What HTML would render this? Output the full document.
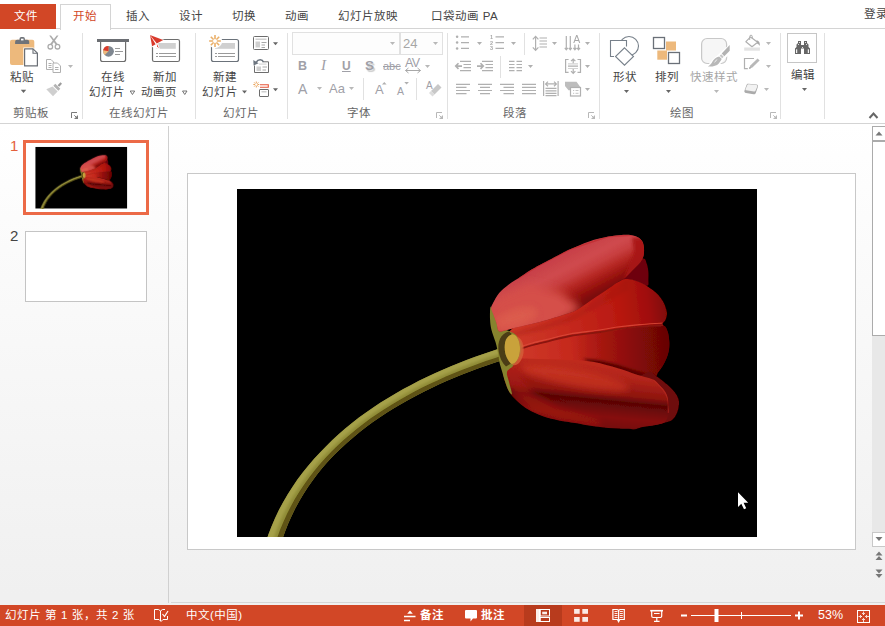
<!DOCTYPE html>
<html lang="zh-CN">
<head>
<meta charset="utf-8">
<title>PowerPoint</title>
<style>
html,body{margin:0;padding:0;}
body{width:885px;height:626px;overflow:hidden;background:#fff;position:relative;
  font-family:"Liberation Sans","Noto Sans CJK SC",sans-serif;font-size:12px;color:#444;}
.a{position:absolute;}
.t{position:absolute;white-space:nowrap;line-height:16px;height:16px;font-size:11.5px;letter-spacing:0.5px;color:#444;}
.g{color:#666;}
.d{color:#a6a6a6;}
.w{color:#fff;}
.fb{color:#a0a0a7;letter-spacing:0;}
.c{text-align:center;}
#tabline{left:0;top:28px;width:885px;height:1px;background:#d4d4d4;}
#file{left:0;top:4px;width:56px;height:25px;background:#d24726;}
#tabsel{left:60px;top:4px;width:49px;height:25px;background:#fff;border:1px solid #d4d4d4;border-bottom:none;}
#ribline{left:0;top:123px;width:885px;height:1px;background:#d4d4d4;}
.sep{position:absolute;width:1px;background:#e1e1e1;top:33px;height:86px;}
#work{left:0;top:124px;width:885px;height:481px;background:linear-gradient(#ffffff 0px,#f0f0f0 470px);}
#pdiv{left:168px;top:126px;width:1px;height:477px;background:#d0d0d0;}
#botline{left:171px;top:602px;width:714px;height:1px;background:#d6d6d6;}
#th1{left:23px;top:140px;width:126px;height:75px;background:#fff;box-sizing:border-box;border:3px solid #ec6a47;}
#th2{left:25px;top:231px;width:120px;height:69px;border:1px solid #c4c4c4;background:#fff;}
#slide{left:187px;top:173px;width:667px;height:375px;border:1px solid #c8c8c8;background:#fff;}
#status{left:0;top:605px;width:885px;height:21px;background:#d24726;}
#vsel{left:524px;top:605px;width:38px;height:21px;background:#b83b1d;}
#sbtrack{left:872px;top:126px;width:13px;height:420px;background:#e8e8e8;}
#sbup{left:872px;top:126px;width:13px;height:15px;background:#fff;border:1px solid #ababab;border-right:none;box-sizing:border-box;}
#sbthumb{left:872px;top:141px;width:14px;height:195px;background:#fff;border:1px solid #ababab;box-sizing:border-box;}
#sbdown{left:872px;top:532px;width:14px;height:15px;background:#fff;border:1px solid #c8c8c8;box-sizing:border-box;}
.box{position:absolute;box-sizing:border-box;border:1px solid #e1e1e1;background:#fdfdfd;}
svg{position:absolute;left:0;top:0;overflow:visible;}
</style>
</head>
<body>
<!-- tab row -->
<div class="a" id="tabline"></div>
<div class="a" id="file"></div>
<div class="a" id="tabsel"></div>
<div class="t w" style="left:14px;top:8px;">文件</div>
<div class="t" style="left:73px;top:8px;color:#d24726;">开始</div>
<div class="t" style="left:126px;top:8px;">插入</div>
<div class="t" style="left:179px;top:8px;">设计</div>
<div class="t" style="left:232px;top:8px;">切换</div>
<div class="t" style="left:285px;top:8px;">动画</div>
<div class="t" style="left:338px;top:8px;">幻灯片放映</div>
<div class="t" style="left:431px;top:8px;">口袋动画 PA</div>
<div class="t" style="left:864px;top:6px;">登录</div>

<!-- ribbon -->
<div class="a" id="ribline"></div>
<div class="sep" style="left:82px;"></div>
<div class="sep" style="left:195px;"></div>
<div class="sep" style="left:287px;"></div>
<div class="sep" style="left:447px;"></div>
<div class="sep" style="left:599px;"></div>
<div class="sep" style="left:780px;"></div>
<div class="sep" style="left:824px;"></div>
<div class="sep" style="left:363px;top:78px;height:22px;"></div>
<div class="sep" style="left:416px;top:78px;height:22px;"></div>
<div class="sep" style="left:500px;top:56px;height:22px;"></div>
<div class="sep" style="left:524px;top:33px;height:22px;"></div>

<div class="t" style="left:10px;top:69px;">粘贴</div>
<div class="t g" style="left:13px;top:105px;">剪贴板</div>

<div class="t" style="left:101px;top:69px;">在线</div>
<div class="t" style="left:89px;top:84px;">幻灯片</div>
<div class="t" style="left:153px;top:69px;">新加</div>
<div class="t" style="left:141px;top:84px;">动画页</div>
<div class="t g" style="left:109px;top:105px;">在线幻灯片</div>

<div class="t" style="left:213px;top:69px;">新建</div>
<div class="t" style="left:202px;top:84px;">幻灯片</div>
<div class="t g" style="left:223px;top:105px;">幻灯片</div>

<div class="box" style="left:292px;top:32px;width:108px;height:23px;"></div>
<div class="box" style="left:400px;top:32px;width:43px;height:23px;"></div>
<div class="t" style="left:403px;top:36px;font-size:13px;color:#a6a6a6;letter-spacing:0;">24</div>
<div class="t fb" style="left:298px;top:58px;font-weight:bold;font-size:12.5px;">B</div>
<div class="t fb" style="left:321px;top:57px;font-family:'Liberation Serif',serif;font-style:italic;font-size:15px;">I</div>
<div class="t fb" style="left:342px;top:58px;font-weight:bold;font-size:12px;text-decoration:underline;">U</div>
<div class="t fb" style="left:365px;top:58px;font-weight:bold;font-size:13.5px;text-shadow:1.5px 1.5px 1px #ccc;">S</div>
<div class="t fb" style="left:383px;top:58px;font-size:11px;text-decoration:line-through;">abc</div>
<div class="t fb" style="left:405px;top:55px;font-size:12.5px;letter-spacing:-0.6px;">AV</div>
<div class="t fb" style="left:298px;top:81px;font-size:14px;">A</div>
<div class="t fb" style="left:329px;top:81px;font-size:13px;">Aa</div>
<div class="t fb" style="left:375px;top:82px;font-size:13px;">A</div>
<div class="t fb" style="left:397px;top:83px;font-size:10.5px;">A</div>
<div class="t fb" style="left:426px;top:78px;font-size:10px;">A</div>
<div class="t g" style="left:347px;top:105px;">字体</div>
<div class="t g" style="left:503px;top:105px;">段落</div>

<div class="t" style="left:613px;top:69px;">形状</div>
<div class="t" style="left:655px;top:69px;">排列</div>
<div class="t d" style="left:690px;top:69px;">快速样式</div>
<div class="t g" style="left:670px;top:105px;">绘图</div>

<div class="box" style="left:787px;top:33px;width:30px;height:30px;border-color:#c6c6c6;background:#fff;"></div>
<div class="t" style="left:791px;top:67px;">编辑</div>

<!-- work area -->
<div class="a" id="work"></div>
<div class="a" id="pdiv"></div>
<div class="a" id="botline"></div>
<div class="t" style="left:10px;top:138px;font-size:15px;letter-spacing:0;color:#e4603c;">1</div>
<div class="t" style="left:10px;top:228px;font-size:15px;letter-spacing:0;color:#444;">2</div>
<div class="a" id="th1"></div>
<div class="a" id="th2"></div>
<div class="a" id="slide"></div>
<div class="a" id="sbtrack"></div>
<div class="a" id="sbup"></div>
<div class="a" id="sbthumb"></div>
<div class="a" id="sbdown"></div>

<!-- status bar -->
<div class="a" id="status"></div>
<div class="a" id="vsel"></div>
<div class="t w" style="left:5px;top:607px;letter-spacing:0.6px;">幻灯片 第 1 张，共 2 张</div>
<div class="t w" style="left:186px;top:607px;">中文(中国)</div>
<div class="t w" style="left:420px;top:607px;font-weight:bold;">备注</div>
<div class="t w" style="left:481px;top:607px;font-weight:bold;">批注</div>
<div class="t w" style="left:818px;top:607px;font-size:12.5px;letter-spacing:0;">53%</div>

<svg width="885" height="626" viewBox="0 0 885 626">
<defs>
<linearGradient id="gTop" gradientUnits="userSpaceOnUse" x1="572" y1="238" x2="602" y2="296"><stop offset="0" stop-color="#bf363e"/><stop offset="0.14" stop-color="#c73f47"/><stop offset="0.38" stop-color="#cf4a4e"/><stop offset="0.52" stop-color="#c83f40"/><stop offset="0.66" stop-color="#b62824"/><stop offset="0.8" stop-color="#9c1410"/><stop offset="0.93" stop-color="#7e0a08"/><stop offset="1" stop-color="#740807"/></linearGradient>
<linearGradient id="gMid" gradientUnits="userSpaceOnUse" x1="510" y1="345" x2="670" y2="325"><stop offset="0" stop-color="#cf3a2a"/><stop offset="0.35" stop-color="#c62a1e"/><stop offset="0.7" stop-color="#b81810"/><stop offset="0.88" stop-color="#a00e0a"/><stop offset="1" stop-color="#7c0606"/></linearGradient>
<linearGradient id="gBot" gradientUnits="userSpaceOnUse" x1="578" y1="356" x2="571" y2="428"><stop offset="0" stop-color="#c42e1f"/><stop offset="0.25" stop-color="#b0241a"/><stop offset="0.48" stop-color="#8e140e"/><stop offset="0.58" stop-color="#5a0505"/><stop offset="0.66" stop-color="#6c0808"/><stop offset="0.8" stop-color="#860e0c"/><stop offset="1" stop-color="#700a0a"/></linearGradient>
<radialGradient id="gBase" gradientUnits="userSpaceOnUse" cx="511.500" cy="350" r="15"><stop offset="0" stop-color="#d0a63a"/><stop offset="0.5" stop-color="#c49c36"/><stop offset="0.72" stop-color="#6a5a18"/><stop offset="0.86" stop-color="#4e4010"/><stop offset="1" stop-color="#7e7c2c"/></radialGradient>
<linearGradient id="gShade" gradientUnits="userSpaceOnUse" x1="572" y1="0" x2="672" y2="0"><stop offset="0" stop-color="#6e0505" stop-opacity="0"/><stop offset="0.6" stop-color="#6e0505" stop-opacity="0.6"/><stop offset="1" stop-color="#600404" stop-opacity="0.85"/></linearGradient>
<filter id="bl1" x="-5%" y="-5%" width="110%" height="110%"><feGaussianBlur stdDeviation="0.550"/></filter>
<filter id="bl2" x="-20%" y="-20%" width="140%" height="140%"><feGaussianBlur stdDeviation="1.500"/></filter>
<filter id="bl5" x="-40%" y="-40%" width="180%" height="180%"><feGaussianBlur stdDeviation="5"/></filter>
<filter id="bl3" x="-30%" y="-30%" width="160%" height="160%"><feGaussianBlur stdDeviation="3"/></filter>
<clipPath id="cpMid"><path d="M605.0,288.0C612.5,284.0 616.5,282.5 620.0,281.0C623.5,279.5 623.4,279.2 625.8,279.1C628.2,279.0 631.4,279.6 634.4,280.5C637.4,281.4 641.1,282.9 644.0,284.4C646.9,285.8 649.2,287.4 651.6,289.2C654.0,290.9 656.5,292.8 658.4,294.9C660.3,297.0 661.8,299.4 663.1,301.6C664.4,303.9 665.4,306.3 666.0,308.4C666.6,310.5 667.1,312.2 667.0,314.1C666.9,316.0 666.3,318.3 665.5,319.9C664.7,321.5 662.5,322.8 662.4,323.9C662.3,325.0 664.3,325.6 665.1,326.6C665.9,327.6 666.5,328.7 667.0,330.0C667.5,331.3 668.0,332.4 668.4,334.4C668.8,336.4 669.2,339.4 669.3,342.1C669.4,344.8 669.3,348.0 668.8,350.7C668.3,353.4 667.4,355.8 666.4,358.4C665.4,360.9 664.0,363.6 662.6,366.0C661.2,368.4 659.1,370.9 657.8,372.7C656.5,374.5 657.9,375.1 654.9,376.8C651.9,378.5 649.1,381.5 640.0,383.0C630.9,384.5 616.7,386.5 600.0,386.0C583.3,385.5 555.0,382.3 540.0,380.0C525.0,377.7 516.2,376.7 510.0,372.0C503.8,367.3 504.0,357.7 503.0,352.0C502.0,346.3 499.5,344.0 504.0,338.0C508.5,332.0 518.2,321.5 530.0,316.0C541.8,310.5 562.5,309.7 575.0,305.0C587.5,300.3 597.5,292.0 605.0,288.0Z"/></clipPath>
<clipPath id="cpBot"><path d="M501.0,358.0C498.8,358.8 501.2,360.7 501.5,363.0C501.8,365.3 502.3,368.9 502.8,371.8C503.3,374.7 503.6,376.9 504.6,380.2C505.7,383.5 507.1,388.3 509.1,391.7C511.1,395.1 513.5,397.7 516.7,400.7C519.9,403.7 523.7,407.0 528.2,409.6C532.7,412.2 538.5,414.8 543.6,416.6C548.7,418.4 553.7,419.4 558.9,420.5C564.1,421.6 570.0,422.2 575.0,423.0C580.0,423.8 583.6,424.7 589.2,425.5C594.8,426.3 601.6,427.4 608.4,427.9C615.2,428.4 624.0,428.9 630.0,428.7C636.0,428.5 639.9,427.3 644.4,426.6C648.9,425.9 653.4,425.5 656.8,424.7C660.2,423.9 663.0,423.9 665.0,422.0C667.0,420.1 668.0,415.8 668.6,413.0C669.2,410.2 668.5,407.9 668.4,405.5C668.3,403.1 668.4,401.0 667.9,398.8C667.4,396.6 666.9,394.4 665.5,392.1C664.1,389.9 661.8,387.4 659.7,385.3C657.6,383.2 656.9,381.3 653.1,379.5C649.3,377.7 643.0,376.6 637.1,374.7C631.2,372.8 625.1,370.4 617.9,368.3C610.7,366.2 602.0,363.4 594.0,362.0C586.0,360.6 579.0,360.5 570.0,360.0C561.0,359.5 549.2,359.3 540.0,359.0C530.8,358.7 521.5,358.2 515.0,358.0C508.5,357.8 503.2,357.2 501.0,358.0Z"/></clipPath>
<clipPath id="cpTop"><path d="M498.8,331.0C497.4,329.8 497.4,325.8 496.5,323.0C495.6,320.2 494.2,316.5 493.3,314.0C492.4,311.5 491.3,309.9 491.3,308.0C491.3,306.1 492.1,305.1 493.4,302.6C494.7,300.1 496.6,296.0 499.2,293.0C501.8,290.0 505.6,286.9 508.8,284.4C512.0,281.9 514.8,280.5 518.4,278.2C522.0,275.9 526.8,272.4 530.3,270.3C533.8,268.2 534.5,267.8 539.2,265.3C543.9,262.8 553.3,257.9 558.4,255.2C563.5,252.5 564.9,251.6 570.0,249.3C575.1,247.0 582.8,243.5 589.2,241.4C595.6,239.3 603.0,237.7 608.4,236.6C613.8,235.5 617.6,235.1 621.5,234.9C625.4,234.7 629.1,234.8 632.0,235.3C634.9,235.8 637.0,236.6 638.8,237.7C640.6,238.8 641.7,240.2 642.6,242.0C643.5,243.8 643.8,246.6 644.0,248.8C644.2,251.1 644.0,253.6 643.6,255.5C643.2,257.4 642.6,258.7 641.6,260.3C640.6,261.9 639.4,263.2 637.8,265.0C636.2,266.8 634.0,268.7 632.0,270.8C630.0,272.9 627.5,276.0 625.5,277.6C623.5,279.2 623.4,278.5 620.0,280.7C616.6,282.9 610.0,287.6 605.0,291.0C600.0,294.4 594.7,297.8 590.0,301.0C585.3,304.2 581.1,307.7 576.7,310.0C572.4,312.3 570.0,312.8 563.9,314.8C557.8,316.8 548.0,319.9 540.0,322.0C532.0,324.1 521.8,326.2 516.0,327.6C510.2,329.0 507.9,329.9 505.0,330.5C502.1,331.1 500.2,332.2 498.8,331.0Z"/></clipPath>
<clipPath id="cpStem"><path d="M260.2,562.5L262.5,553.3L265.1,544.2L268.1,535.3L271.4,526.7L275.0,518.3L278.9,510.1L283.1,502.2L287.6,494.4L292.4,486.9L297.4,479.6L302.7,472.6L308.2,465.7L313.9,459.1L319.8,452.7L325.9,446.4L332.1,440.2L338.6,434.3L345.2,428.6L352.0,423.0L358.9,417.6L366.0,412.4L373.2,407.4L380.6,402.6L388.1,397.9L395.6,393.4L403.3,389.0L411.1,384.9L418.9,380.8L426.8,377.0L434.8,373.2L442.8,369.7L450.9,366.2L459.0,363.0L467.1,359.8L475.2,356.8L483.3,353.9L491.4,351.2L499.5,348.5L507.5,346.1L511.0,357.4L503.1,359.9L495.2,362.5L487.2,365.2L479.2,368.0L471.3,370.9L463.4,374.0L455.4,377.2L447.6,380.6L439.7,384.1L432.0,387.7L424.3,391.5L416.6,395.4L409.1,399.5L401.6,403.7L394.3,408.1L387.0,412.6L379.9,417.3L372.9,422.1L366.1,427.1L359.4,432.3L352.9,437.7L346.5,443.2L340.3,448.9L334.3,454.7L328.6,460.8L323.1,467.1L317.8,473.6L312.8,480.2L308.0,487.0L303.5,494.1L299.2,501.3L295.2,508.6L291.5,516.2L288.0,524.0L284.9,532.0L282.0,540.1L279.5,548.5L277.3,557.1L275.3,566.0Z"/></clipPath>
<g id="tulip">
<rect x="237" y="189" width="520" height="348" fill="#000"/>
<g filter="url(#bl1)">
<path d="M260.2,562.5L262.5,553.3L265.1,544.2L268.1,535.3L271.4,526.7L275.0,518.3L278.9,510.1L283.1,502.2L287.6,494.4L292.4,486.9L297.4,479.6L302.7,472.6L308.2,465.7L313.9,459.1L319.8,452.7L325.9,446.4L332.1,440.2L338.6,434.3L345.2,428.6L352.0,423.0L358.9,417.6L366.0,412.4L373.2,407.4L380.6,402.6L388.1,397.9L395.6,393.4L403.3,389.0L411.1,384.9L418.9,380.8L426.8,377.0L434.8,373.2L442.8,369.7L450.9,366.2L459.0,363.0L467.1,359.8L475.2,356.8L483.3,353.9L491.4,351.2L499.5,348.5L507.5,346.1L511.0,357.4L503.1,359.9L495.2,362.5L487.2,365.2L479.2,368.0L471.3,370.9L463.4,374.0L455.4,377.2L447.6,380.6L439.7,384.1L432.0,387.7L424.3,391.5L416.6,395.4L409.1,399.5L401.6,403.7L394.3,408.1L387.0,412.6L379.9,417.3L372.9,422.1L366.1,427.1L359.4,432.3L352.9,437.7L346.5,443.2L340.3,448.9L334.3,454.7L328.6,460.8L323.1,467.1L317.8,473.6L312.8,480.2L308.0,487.0L303.5,494.1L299.2,501.3L295.2,508.6L291.5,516.2L288.0,524.0L284.9,532.0L282.0,540.1L279.5,548.5L277.3,557.1L275.3,566.0Z" fill="#8e8a36"/>
<g clip-path="url(#cpStem)"><path d="M258.7,562.2L261.0,553.0L263.7,543.8L266.7,534.9L270.1,526.2L273.7,517.7L277.7,509.5L281.9,501.5L286.5,493.8L291.3,486.2L296.3,478.9L301.6,471.8L307.2,465.0L313.0,458.3L318.9,451.8L325.0,445.5L331.3,439.4L337.8,433.4L344.4,427.7L351.2,422.1L358.2,416.7L365.3,411.5L372.6,406.4L379.9,401.6L387.4,396.9L395.0,392.4L402.7,388.0L410.5,383.8L418.4,379.8L426.3,375.9L434.3,372.2L442.3,368.6L450.4,365.1L458.5,361.8L466.7,358.7L474.8,355.7L482.9,352.8L491.0,350.0L499.1,347.4L507.2,344.9L509.0,350.8L501.0,353.3L493.0,355.9L484.9,358.6L476.9,361.5L468.8,364.5L460.8,367.6L452.8,370.9L444.8,374.2L436.9,377.8L429.0,381.5L421.2,385.3L413.4,389.3L405.7,393.4L398.1,397.7L390.7,402.2L383.3,406.8L376.0,411.6L368.9,416.5L361.9,421.6L355.1,426.9L348.4,432.4L341.9,438.0L335.6,443.9L329.4,449.9L323.5,456.1L317.7,462.4L312.2,469.0L306.9,475.8L301.9,482.8L297.1,489.9L292.5,497.3L288.2,504.9L284.2,512.7L280.5,520.7L277.1,528.9L274.0,537.4L271.2,546.0L268.7,554.9L266.6,564.0Z" fill="#a6a148" filter="url(#bl2)"/><path d="M269.9,564.8L271.9,555.7L274.3,547.0L277.0,538.4L280.0,530.1L283.4,521.9L287.0,514.0L290.9,506.3L295.0,498.8L299.5,491.5L304.2,484.4L309.2,477.5L314.4,470.7L319.8,464.2L325.4,457.9L331.3,451.7L337.4,445.8L343.6,440.0L350.1,434.4L356.7,429.0L363.5,423.7L370.4,418.6L377.5,413.7L384.7,409.0L392.0,404.4L399.5,400.0L407.0,395.7L414.6,391.6L422.3,387.6L430.1,383.8L438.0,380.2L445.9,376.6L453.8,373.3L461.8,370.0L469.8,366.9L477.8,364.0L485.8,361.1L493.8,358.4L501.8,355.8L509.8,353.3L511.4,358.6L503.5,361.0L495.5,363.6L487.6,366.3L479.7,369.1L471.7,372.0L463.8,375.1L455.9,378.3L448.0,381.7L440.2,385.1L432.5,388.8L424.8,392.5L417.2,396.4L409.6,400.5L402.2,404.7L394.9,409.1L387.7,413.6L380.6,418.3L373.6,423.1L366.8,428.1L360.1,433.2L353.6,438.6L347.3,444.1L341.1,449.7L335.2,455.6L329.4,461.6L324.0,467.9L318.8,474.3L313.8,481.0L309.1,487.8L304.6,494.8L300.4,501.9L296.4,509.3L292.7,516.8L289.3,524.6L286.2,532.5L283.4,540.6L280.9,548.9L278.7,557.4L276.8,566.4Z" fill="#5e5212" filter="url(#bl1)"/></g>
<path d="M634.0,264.0C637.6,261.4 641.5,258.4 643.6,258.4C645.8,258.4 646.1,261.9 646.9,264.1C647.7,266.3 648.1,269.2 648.4,271.8C648.6,274.4 648.5,277.7 648.4,280.0C648.3,282.3 649.2,284.9 647.8,285.6C646.4,286.4 643.0,285.2 640.0,284.5C637.0,283.8 633.2,281.8 630.0,281.5C626.8,281.2 622.3,284.2 621.0,283.0C619.7,281.8 619.8,277.2 622.0,274.0C624.2,270.8 630.4,266.6 634.0,264.0Z" fill="#6e0608"/>
<path d="M605.0,288.0C612.5,284.0 616.5,282.5 620.0,281.0C623.5,279.5 623.4,279.2 625.8,279.1C628.2,279.0 631.4,279.6 634.4,280.5C637.4,281.4 641.1,282.9 644.0,284.4C646.9,285.8 649.2,287.4 651.6,289.2C654.0,290.9 656.5,292.8 658.4,294.9C660.3,297.0 661.8,299.4 663.1,301.6C664.4,303.9 665.4,306.3 666.0,308.4C666.6,310.5 667.1,312.2 667.0,314.1C666.9,316.0 666.3,318.3 665.5,319.9C664.7,321.5 662.5,322.8 662.4,323.9C662.3,325.0 664.3,325.6 665.1,326.6C665.9,327.6 666.5,328.7 667.0,330.0C667.5,331.3 668.0,332.4 668.4,334.4C668.8,336.4 669.2,339.4 669.3,342.1C669.4,344.8 669.3,348.0 668.8,350.7C668.3,353.4 667.4,355.8 666.4,358.4C665.4,360.9 664.0,363.6 662.6,366.0C661.2,368.4 659.1,370.9 657.8,372.7C656.5,374.5 657.9,375.1 654.9,376.8C651.9,378.5 649.1,381.5 640.0,383.0C630.9,384.5 616.7,386.5 600.0,386.0C583.3,385.5 555.0,382.3 540.0,380.0C525.0,377.7 516.2,376.7 510.0,372.0C503.8,367.3 504.0,357.7 503.0,352.0C502.0,346.3 499.5,344.0 504.0,338.0C508.5,332.0 518.2,321.5 530.0,316.0C541.8,310.5 562.5,309.7 575.0,305.0C587.5,300.3 597.5,292.0 605.0,288.0Z" fill="url(#gMid)"/>
<g clip-path="url(#cpMid)">
<path d="M500,334 L516,330.600 L540,325 L563.900,317.800 L576.700,313 L590,304 L605,294 L620,283.700 L628,279 L628,290 L600,306 L570,322 L540,331 L510,338 z" fill="#9a1410" opacity="0.250" filter="url(#bl2)"/>
<path d="M560,337.500 L600,332.500 L640,327 L672,323 L672,386 L560,386 z" fill="url(#gShade)"/>
<path d="M583,358.500 L600,360.500 L617.900,364.800 L637.100,371.200 L656,377.500 L653,381 L630,378 L610,371 L590,363 z" fill="#560404" filter="url(#bl2)"/>
<path d="M519.0,349.3C521.3,348.6 528.2,346.3 533.0,345.0C537.8,343.7 541.8,342.8 548.0,341.3C554.2,339.8 561.3,337.6 570.0,336.0C578.7,334.4 591.7,333.2 600.0,332.0C608.3,330.8 613.3,329.7 620.0,328.8C626.7,327.9 632.8,327.2 640.0,326.6C647.2,326.0 659.2,325.3 663.0,325.0" fill="none" stroke="#8a1210" stroke-width="1.800"/>
<path d="M519.0,349.3C521.3,348.6 528.2,346.3 533.0,345.0C537.8,343.7 541.8,342.8 548.0,341.3C554.2,339.8 561.3,337.6 570.0,336.0C578.7,334.4 591.7,333.2 600.0,332.0C608.3,330.8 613.3,329.7 620.0,328.8C626.7,327.9 632.8,327.2 640.0,326.6C647.2,326.0 659.2,325.3 663.0,325.0" fill="none" stroke="#dc4a3a" stroke-width="1.100" opacity="0.850" transform="translate(-0.4,-2)"/>
</g>
<path d="M648.0,372.0C652.3,370.5 653.3,374.2 655.9,375.8C658.5,377.4 661.0,379.4 663.6,381.5C666.2,383.6 669.1,386.1 671.2,388.2C673.3,390.3 674.7,391.9 676.0,394.0C677.3,396.1 678.5,398.3 678.9,400.7C679.3,403.1 678.9,406.0 678.4,408.4C677.9,410.8 677.0,413.2 676.0,415.1C675.0,417.0 673.8,418.7 672.2,419.9C670.6,421.1 669.0,421.5 666.4,422.3C663.8,423.1 660.5,424.0 656.8,424.7C653.1,425.4 648.9,426.0 644.4,426.6C639.9,427.2 634.9,431.3 630.0,428.5C625.1,425.7 615.0,417.2 615.0,410.0C615.0,402.8 624.5,391.3 630.0,385.0C635.5,378.7 643.7,373.5 648.0,372.0Z" fill="#6e0808"/>
<path d="M501.0,358.0C498.8,358.8 501.2,360.7 501.5,363.0C501.8,365.3 502.3,368.9 502.8,371.8C503.3,374.7 503.6,376.9 504.6,380.2C505.7,383.5 507.1,388.3 509.1,391.7C511.1,395.1 513.5,397.7 516.7,400.7C519.9,403.7 523.7,407.0 528.2,409.6C532.7,412.2 538.5,414.8 543.6,416.6C548.7,418.4 553.7,419.4 558.9,420.5C564.1,421.6 570.0,422.2 575.0,423.0C580.0,423.8 583.6,424.7 589.2,425.5C594.8,426.3 601.6,427.4 608.4,427.9C615.2,428.4 624.0,428.9 630.0,428.7C636.0,428.5 639.9,427.3 644.4,426.6C648.9,425.9 653.4,425.5 656.8,424.7C660.2,423.9 663.0,423.9 665.0,422.0C667.0,420.1 668.0,415.8 668.6,413.0C669.2,410.2 668.5,407.9 668.4,405.5C668.3,403.1 668.4,401.0 667.9,398.8C667.4,396.6 666.9,394.4 665.5,392.1C664.1,389.9 661.8,387.4 659.7,385.3C657.6,383.2 656.9,381.3 653.1,379.5C649.3,377.7 643.0,376.6 637.1,374.7C631.2,372.8 625.1,370.4 617.9,368.3C610.7,366.2 602.0,363.4 594.0,362.0C586.0,360.6 579.0,360.5 570.0,360.0C561.0,359.5 549.2,359.3 540.0,359.0C530.8,358.7 521.5,358.2 515.0,358.0C508.5,357.8 503.2,357.2 501.0,358.0Z" fill="url(#gBot)"/>
<g clip-path="url(#cpBot)">
<ellipse cx="575" cy="378" rx="55" ry="9" fill="#d03a28" opacity="0.600" filter="url(#bl3)" transform="rotate(11 575 378)"/>
<path d="M498,356 L512,392 L530,410 L560,421 L600,428 L600,420 L560,408 L535,395 L520,375 L512,356 z" fill="#a81c18" opacity="0.550" filter="url(#bl3)"/>
<path d="M653.100,379.500 C660,385.500 666,392 667.900,398.800 C668.600,402 668.600,408 668.500,413" stroke="#b42a22" stroke-width="1.600" fill="none" opacity="0.750"/>
</g>
<path d="M490.5,307.0C489.9,308.3 489.9,316.2 490.1,320.0C490.3,323.8 490.6,326.3 491.5,330.0C492.4,333.7 494.6,339.0 495.5,342.0C496.4,345.0 496.5,345.7 497.0,348.0C497.5,350.3 498.1,353.6 498.5,356.0C498.9,358.4 498.9,359.9 499.5,362.5C500.1,365.1 501.3,368.9 502.2,371.8C503.1,374.8 503.6,377.1 504.6,380.2C505.7,383.3 507.3,388.2 508.5,390.5C509.7,392.8 511.9,395.4 512.0,394.0C512.1,392.6 509.8,385.7 509.0,382.0C508.2,378.3 506.3,374.7 507.0,372.0C507.7,369.3 510.8,368.7 513.0,366.0C515.2,363.3 518.6,359.5 520.0,356.0C521.4,352.5 522.2,348.5 521.5,345.0C520.8,341.5 518.6,337.5 516.0,335.0C513.4,332.5 508.8,331.0 506.0,330.0C503.2,329.0 501.1,330.5 499.5,329.0C497.9,327.5 497.4,323.8 496.5,321.0C495.6,318.2 495.0,314.3 494.0,312.0C493.0,309.7 491.1,305.7 490.5,307.0Z" fill="#86832f"/>
<path d="M509,331.500 C500.500,333.500 497,342 498.800,352 C499.800,358 502,362.500 506,366.500 L511,363.500 C506,358.500 504.300,352 504.800,345 C505.300,339 508,335.800 512,334.300 z" fill="#4c3c12"/>
<path d="M512,334.300 C508,335.800 505.300,339 504.800,345 C504.300,352 506,358.500 511,363.800 C515,364.500 518,360.500 519.500,354 C520.800,348 519.800,340.500 516.500,336.500 C515,335 513.500,334.300 512,334.300 z" fill="#c9a23a"/>
<path d="M516.500,336.500 C519.800,340.500 520.800,348 519.500,354 C518,360.500 515,364.500 511,363.800 C516,368 522,362 523.500,353 C524.500,345 522,338 516.500,336.500 z" fill="#d4603a" opacity="0.800"/>
<path d="M498.8,331.0C497.4,329.8 497.4,325.8 496.5,323.0C495.6,320.2 494.2,316.5 493.3,314.0C492.4,311.5 491.3,309.9 491.3,308.0C491.3,306.1 492.1,305.1 493.4,302.6C494.7,300.1 496.6,296.0 499.2,293.0C501.8,290.0 505.6,286.9 508.8,284.4C512.0,281.9 514.8,280.5 518.4,278.2C522.0,275.9 526.8,272.4 530.3,270.3C533.8,268.2 534.5,267.8 539.2,265.3C543.9,262.8 553.3,257.9 558.4,255.2C563.5,252.5 564.9,251.6 570.0,249.3C575.1,247.0 582.8,243.5 589.2,241.4C595.6,239.3 603.0,237.7 608.4,236.6C613.8,235.5 617.6,235.1 621.5,234.9C625.4,234.7 629.1,234.8 632.0,235.3C634.9,235.8 637.0,236.6 638.8,237.7C640.6,238.8 641.7,240.2 642.6,242.0C643.5,243.8 643.8,246.6 644.0,248.8C644.2,251.1 644.0,253.6 643.6,255.5C643.2,257.4 642.6,258.7 641.6,260.3C640.6,261.9 639.4,263.2 637.8,265.0C636.2,266.8 634.0,268.7 632.0,270.8C630.0,272.9 627.5,276.0 625.5,277.6C623.5,279.2 623.4,278.5 620.0,280.7C616.6,282.9 610.0,287.6 605.0,291.0C600.0,294.4 594.7,297.8 590.0,301.0C585.3,304.2 581.1,307.7 576.7,310.0C572.4,312.3 570.0,312.8 563.9,314.8C557.8,316.8 548.0,319.9 540.0,322.0C532.0,324.1 521.8,326.2 516.0,327.6C510.2,329.0 507.9,329.9 505.0,330.5C502.1,331.1 500.2,332.2 498.8,331.0Z" fill="url(#gTop)"/>
<g clip-path="url(#cpTop)">
<path d="M484,344 L556,326 L582,308 L560,292 L530,284 L500,296 L482,316 z" fill="#d5504a" filter="url(#bl5)"/>
<ellipse cx="516" cy="318" rx="22" ry="9" fill="#de6050" opacity="0.700" filter="url(#bl3)" transform="rotate(-18 516 318)"/>
<path d="M632,238 L650,236 L652,262 L634,277 L622,284 L628,268 L634,252 z" fill="#a81512" opacity="0.900" filter="url(#bl2)"/>
<path d="M518.400,278.200 L539.200,265.300 L570,249.300 L608.400,236.600 L632,235.300" fill="none" stroke="#c0262a" stroke-width="1.500" opacity="0.600"/>
</g>
</g>
</g>
</defs>
<clipPath id="cpImg"><rect x="237" y="189" width="520" height="348"/></clipPath>
<g clip-path="url(#cpImg)"><use href="#tulip"/></g>
<g transform="translate(-6.70,113.28) scale(0.177,0.1776)"><g clip-path="url(#cpImg)"><use href="#tulip"/></g></g>
<path d="M738,492.300 V507 L741.300,503.800 L744,509.300 L746.200,508.300 L743.600,502.800 H748.200 Z" fill="#fff"/>
<!-- ===== clipboard group ===== -->
<g id="i-paste">
<path d="M12,39.800 h20.300 a2,2 0 0 1 2,2 v21.200 a2,2 0 0 1 -2,2 h-20.300 a2,2 0 0 1 -2,-2 v-21.200 a2,2 0 0 1 2,-2 z" fill="#edb97c"/>
<path d="M15.100,44.100 v-2.300 a2,2 0 0 1 2,-2 h2.400 v-1 a1.800,1.800 0 0 1 1.800,-1.800 h1.800 a1.800,1.800 0 0 1 1.800,1.800 v1 h2.300 a2,2 0 0 1 2,2 v2.300 z" fill="#6f7379"/>
<rect x="21" y="38.700" width="2.500" height="1.700" fill="#fff"/>
<path d="M23.400,47.600 h10 l5.200,5.200 v14.300 h-15.200 z" fill="#fff"/>
<path d="M24.600,48.800 h8.400 l4.400,4.400 v12.700 h-12.800 z" fill="#fff" stroke="#6a6f76" stroke-width="1.200" stroke-linejoin="round"/>
<path d="M33,48.800 v4.400 h4.400" fill="none" stroke="#6a6f76" stroke-width="1.100"/>
</g>
<path d="M20.800,89.800 h5.400 l-2.700,3.200 z" fill="#666"/>
<!-- scissors -->
<path d="M49.200,35.600 L51,35.600 L58.300,45 L56.600,46 z" fill="#ababab"/>
<path d="M58.500,35.600 L56.700,35.600 L49.400,45 L51.100,46 z" fill="#ababab"/>
<g fill="#fff" stroke="#ababab" stroke-width="1.300">
<circle cx="50.300" cy="46.700" r="2.300"/><circle cx="57.500" cy="46.700" r="2.300"/>
</g>
<!-- copy -->
<g fill="#fff" stroke="#b0b0b0" stroke-width="1">
<path d="M46.500,59.500 h4.500 l2.500,2.500 v7.500 h-7 z"/>
<path d="M53,63 h4.500 l3,3 v6.500 h-7.500 z"/>
<path d="M48.500,63.500 h3 M48.500,65.500 h3 M48.500,67.500 h3 M55,67.500 h3.500 M55,69.500 h3.500" fill="none"/>
</g>
<path d="M68,65 h5 l-2.500,3 z" fill="#b8b8b8"/>
<!-- format painter -->
<path d="M57.600,85.300 L60.500,82.300 L62,83.800 L59.200,86.800 z" fill="#9c9c9c"/>
<path d="M53.300,85.800 L55.300,83.800 L60.300,88.800 L58.300,90.800 z" fill="#b4b4b4"/>
<path d="M52.600,86.600 L57.600,91.600 L53,96.300 L46.300,89.200 z" fill="#cfcfcf"/>
<!-- dialog launchers -->
<g id="dl">
<path d="M71.500,118 v-5.500 h5.500" fill="none" stroke="#7a7a7a" stroke-width="1"/>
<path d="M78,115 v4 h-4 z" fill="#7a7a7a"/>
<path d="M74.300,115.300 l2.500,2.500" fill="none" stroke="#7a7a7a" stroke-width="1"/>
</g>
<g id="dl2">
<path d="M436.500,118 v-5.500 h5.500" fill="none" stroke="#b8b8b8" stroke-width="1"/>
<path d="M443,115 v4 h-4 z" fill="#b8b8b8"/>
<path d="M439.300,115.300 l2.500,2.500" fill="none" stroke="#b8b8b8" stroke-width="1"/>
</g>
<use href="#dl2" x="152" y="0"/>
<use href="#dl2" x="334" y="0"/>

<!-- ===== online slides group ===== -->
<rect x="97" y="39" width="32" height="3" fill="#6b6e73"/>
<path d="M100.600,42 v17.500 a2,2 0 0 0 2,2 h21 a2,2 0 0 0 2,-2 v-17.500" fill="#fff" stroke="#6d6d6d" stroke-width="1.200"/>
<circle cx="108.500" cy="51.300" r="5.400" fill="#7f8790"/>
<path d="M108.500,51.300 L108.500,45.900 A5.400,5.400 0 0 0 104.700,55.100 z" fill="#edb97c"/>
<path d="M108.500,51.300 L108.500,45.900 A5.400,5.400 0 0 0 103.200,50.300 z" fill="#d9392b"/>
<path d="M115,48.500 h5 M115,51.500 h8 M115,54.500 h5" stroke="#9a9a9a" stroke-width="1" fill="none"/>
<path d="M130.200,91 h4.500 l-2.250,3.500 z" fill="none" stroke="#666" stroke-width="0.900"/>

<rect x="152.500" y="39.500" width="27" height="22" rx="1.800" fill="#fff" stroke="#6d6d6d" stroke-width="1.200"/>
<rect x="156.200" y="43" width="19.600" height="5.800" fill="#d0d0d0"/>
<path d="M156,53.500 h2 M159,53.500 h17 M156,56.500 h2 M159,56.500 h17" stroke="#9a9a9a" stroke-width="1" fill="none"/>
<path d="M149,34 L164.500,40 L158,43.500 L160,49.500 L152,47 z" fill="#fff"/>
<path d="M150,35 L163.200,40.100 L156.800,43.400 z" fill="#d9392b"/>
<path d="M150,35 L155.600,44.200 L152.100,46.200 z" fill="#d9392b"/>
<path d="M156.800,43.700 L159,48.300 L157.100,46.600 z" fill="#d9392b"/>
<path d="M182.500,91 h4.500 l-2.250,3.500 z" fill="none" stroke="#666" stroke-width="0.900"/>

<!-- ===== slides group ===== -->
<rect x="211.500" y="39.500" width="27" height="22" rx="2" fill="#fff" stroke="#6b727a" stroke-width="1.200"/>
<rect x="215" y="43" width="20" height="5.800" fill="#d0d0d0"/>
<path d="M215,53.500 h2 M218,53.500 h17 M215,56.500 h2 M218,56.500 h17" stroke="#9a9a9a" stroke-width="1" fill="none"/>
<circle cx="215" cy="41" r="7.200" fill="#fff"/>
<g stroke="#eab06a" stroke-width="1.600" fill="none">
<path d="M215,35.100 v11.800 M209.100,41 h11.800 M210.800,36.800 l8.400,8.400 M219.200,36.800 l-8.400,8.400"/>
</g>
<circle cx="215" cy="41" r="2" fill="#fff"/>
<path d="M242,90.500 h5 l-2.500,3 z" fill="#666"/>
<!-- layout icon -->
<rect x="253.500" y="36.500" width="15" height="13" rx="1" fill="#fff" stroke="#6d6d6d" stroke-width="1"/>
<rect x="255.500" y="38.500" width="11" height="1.500" fill="#cfcfcf"/>
<rect x="255.500" y="41.500" width="4.500" height="6" fill="#cfcfcf"/>
<path d="M261.500,42.500 h5 M261.500,45 h3.500 M261.500,47.500 h3.500" stroke="#a8a8a8" stroke-width="1" fill="none"/>
<path d="M273,42.300 h5 l-2.500,3 z" fill="#666"/>
<!-- reset icon -->
<path d="M262.500,61.800 h6 v10.700 h-14 v-7" fill="#fff" stroke="#6d6d6d" stroke-width="1"/>
<rect x="256.500" y="66.500" width="4.500" height="4.500" fill="#cfcfcf"/>
<rect x="259" y="63.500" width="7.500" height="1.200" fill="#d8d8d8"/>
<path d="M262.500,67 h4.500 M262.500,70 h3.500" stroke="#a8a8a8" stroke-width="1" fill="none"/>
<path d="M263.500,62 c-1,-2.500 -5,-3.500 -7.500,0.500" fill="none" stroke="#6d7680" stroke-width="1.500"/>
<path d="M253.300,60 l0.300,5.500 l5,-2.200 z" fill="#6d7680"/>
<!-- section icon -->
<g stroke="#eaa45c" stroke-width="1" fill="none"><path d="M256.300,81.500 v6 M253.300,84.500 h6 M254.200,82.400 l4.200,4.200 M258.400,82.400 l-4.200,4.200"/></g>
<circle cx="256.300" cy="84.500" r="1.200" fill="#fff"/>
<path d="M260,84.800 h8.300 v2.500 h-8.300" fill="none" stroke="#e8553a" stroke-width="1.100"/>
<rect x="259.500" y="89.500" width="9" height="7" rx="0.500" fill="#fff" stroke="#6d6d6d" stroke-width="1"/>
<rect x="261.500" y="91" width="5" height="1.500" fill="#cfcfcf"/>
<path d="M273,88.300 h5 l-2.500,3 z" fill="#666"/>
<!-- ===== font group ===== -->
<path d="M390,42 h5 l-2.500,3 z" fill="#b8b8b8"/>
<path d="M433,42 h5 l-2.500,3 z" fill="#b8b8b8"/>
<path d="M317,87 h5 l-2.500,3 z" fill="#b8b8b8"/>
<path d="M349,87 h5 l-2.500,3 z" fill="#b8b8b8"/>
<path d="M425,65 h5 l-2.500,3 z" fill="#b8b8b8"/>
<path d="M405.500,70.500 h15 M408.500,68 l-3,2.500 l3,2.500 M417.500,68 l3,2.500 l-3,2.500" fill="none" stroke="#a8a8a8" stroke-width="1"/>
<path d="M382,84.500 h4.600 l-2.300,-2.600 z" fill="#b0b0b0"/>
<path d="M404.300,82 h4.600 l-2.300,2.600 z" fill="#b0b0b0"/>
<!-- eraser -->
<path d="M431,91 l7,-7 l3.500,3.500 l-7,7 z" fill="#c8c8c8"/>
<path d="M429,93 l2,-2 l3.500,3.500 l-2,2 z" fill="#dcdcdc"/>
<!-- ===== paragraph group (disabled) ===== -->
<g fill="none" stroke="#b0b0b0" stroke-width="1.200">
<!-- bullets -->
<path d="M461,36.800 h8 M461,42.600 h8 M461,48.400 h8"/>
<!-- numbering -->
<path d="M495.500,36.800 h8.500 M495.500,42.600 h8.500 M495.500,48.400 h8.500"/>
<!-- line spacing -->
<path d="M539.500,38 h7.500 M539.500,41 h7.500 M539.500,44 h7.500 M539.500,47 h7.500 M535.600,36.500 v13.500 M532.800,39.300 l2.800,-3 l2.800,3 M532.800,47.300 l2.800,3 l2.800,-3"/>
<!-- text direction -->
<path d="M566.300,36 v13.500 M570.300,36 v13.500 M574.900,44.500 v5 M578.500,44.500 v5 M564.800,47.800 l1.500,2 l1.500,-2 M568.800,47.800 l1.500,2 l1.500,-2 M573.400,47.800 l1.500,2 l1.500,-2 M577,47.800 l1.500,2 l1.500,-2"/>
<!-- decrease indent -->
<path d="M460,61.400 h11 M463.500,64.500 h7.500 M463.500,67.600 h7.500 M460,70.700 h11"/>
<path d="M456,66.100 h6 M458.500,63.300 l-2.800,2.800 l2.800,2.800" stroke-width="1.600"/>
<!-- increase indent -->
<path d="M482,61.400 h11 M485.500,64.500 h7.500 M485.500,67.600 h7.500 M482,70.700 h11"/>
<path d="M477,66.100 h6 M480.500,63.300 l2.800,2.800 l-2.800,2.800" stroke-width="1.600"/>
<!-- columns -->
<path d="M509,61.400 h5.500 M516.500,61.400 h5.500 M509,64.500 h5.500 M516.500,64.500 h5.500 M509,67.600 h5.500 M516.500,67.600 h5.500 M509,70.700 h5.500 M516.500,70.700 h5.500"/>
<!-- align text -->
<path d="M568.600,59.500 h-3 v12.800 h3 M577.500,59.500 h3 v12.800 h-3 M568,66.200 h10 M573.200,59 v4.500 M571,61.200 l2.200,-2.200 l2.200,2.200 M573.200,68.800 v4.500 M571,71.200 l2.200,2.200 l2.200,-2.200"/>
<path d="M568,63.900 h10 M568,68.500 h10" stroke="#d4d4d4"/>
<!-- align left -->
<path d="M456,84.300 h14 M456,87.400 h10.500 M456,90.500 h14 M456,93.600 h10.500"/>
<!-- center -->
<path d="M478,84.300 h14 M480,87.400 h10 M478,90.500 h14 M480,93.600 h10"/>
<!-- right -->
<path d="M500,84.300 h14 M503.500,87.400 h10.500 M500,90.500 h14 M503.500,93.600 h10.500"/>
<!-- justify -->
<path d="M522,84.300 h14 M522,87.400 h14 M522,90.500 h14 M522,93.600 h14"/>
<!-- distribute -->
<path d="M543.600,81 v15 M558.100,81 v15 M545.500,88.300 h11 M545.500,90.800 h11 M545.500,93.300 h11 M545.500,95.600 h11 M545.500,83.900 h11 M548,81.600 l-2.400,2.300 l2.400,2.300 M554,81.600 l2.400,2.300 l-2.400,2.300"/>
</g>
<g fill="#b0b0b0">
<circle cx="457.100" cy="36.800" r="1.250"/><circle cx="457.100" cy="42.600" r="1.250"/><circle cx="457.100" cy="48.400" r="1.250"/>
<path d="M477,42 h5 l-2.500,3 z"/><path d="M511,42 h5 l-2.500,3 z"/><path d="M552,42 h5 l-2.500,3 z"/><path d="M585,42 h5 l-2.500,3 z"/>
<path d="M528,65 h5 l-2.500,3 z"/><path d="M585,65 h5 l-2.500,3 z"/><path d="M585,88 h5 l-2.500,3 z"/>
<!-- smartart -->
<path d="M565,81.700 h11.500 l4,5.500 v3 h-12 l-3.500,-4.200 z" fill="#bdbdbd"/>
</g>
<text x="490" y="38.800" font-family="Liberation Sans, sans-serif" font-size="5.500" font-weight="bold" fill="#a8a8a8">1</text>
<text x="490" y="44.600" font-family="Liberation Sans, sans-serif" font-size="5.500" font-weight="bold" fill="#a8a8a8">2</text>
<text x="490" y="50.400" font-family="Liberation Sans, sans-serif" font-size="5.500" font-weight="bold" fill="#a8a8a8">3</text>
<text x="573.200" y="42.800" font-family="Liberation Sans, sans-serif" font-size="10.500" fill="#a8a8a8">A</text>
<rect x="570.500" y="87.500" width="10" height="8.500" fill="#fff" stroke="#b0b0b0" stroke-width="1.200"/>
<path d="M573,90.500 h1.200 M575.500,90.500 h3 M573,93.300 h1.200 M575.500,93.300 h3" stroke="#c4c4c4" stroke-width="1" fill="none"/>
<!-- ===== drawing group ===== -->

<circle cx="629" cy="46" r="9.500" fill="#fff" stroke="#77808a" stroke-width="1.100"/>
<rect x="610" y="41" width="17" height="15.500" fill="#fff"/>
<path d="M614,56.500 h-3.500 v-16 h16 v6" fill="none" stroke="#77808a" stroke-width="1.100"/>
<path d="M624.500,47.800 l9,8.700 l-9,8.700 l-9,-8.700 z" fill="#fff" stroke="#77808a" stroke-width="1.100"/>
<path d="M624,90 h5 l-2.500,3 z" fill="#666"/>
<!-- arrange -->
<rect x="666" y="41.500" width="10" height="9" fill="#edb97c"/>
<rect x="657.300" y="50.500" width="9.700" height="9.200" fill="#edb97c"/>
<rect x="653.500" y="37.500" width="11" height="11" fill="#fff" stroke="#6a7078" stroke-width="1.300"/>
<rect x="668.500" y="52.500" width="11" height="11" fill="#fff" stroke="#6a7078" stroke-width="1.300"/>
<path d="M666,90 h5 l-2.500,3 z" fill="#666"/>
<!-- quick styles -->
<rect x="701.600" y="38.500" width="25" height="25" rx="5.500" fill="#f6f6f6" stroke="#c8c8c8" stroke-width="1.200"/>
<path d="M731,43 L731,52 L722,62 L718,66.500 L706,68 L712,60 L720,53 z" fill="#fff"/>
<path d="M729.700,45.100 L729.700,50.700 L724.300,56.200 L721.700,53.600 z" fill="#b2b2b2"/>
<path d="M721.200,54.200 L723.700,56.800 L722.200,58.300 L719.700,55.800 z" fill="#c6c6c6"/>
<path d="M719.200,56.400 C716,57 713.500,59.500 712.500,61.500 C711.500,63.500 710,65.200 707.900,66.400 C712,66.800 716.500,66 718.800,63.400 C720.600,61.300 721.800,59.500 721.600,58.800 z" fill="#b8b8b8"/>
<path d="M717.500,59 C715.500,60 714.500,61.500 713.800,63 C715.500,62 717,60.800 717.500,59 z" fill="#e8e8e8"/>
<path d="M714,90 h5 l-2.500,3 z" fill="#b8b8b8"/>
<!-- shape fill -->
<path d="M750.600,36.900 L757.600,42.300 L752,46.800 L745.900,41.700 z" fill="#fff" stroke="#b0b0b0" stroke-width="1.200" stroke-linejoin="round"/>
<path d="M749.700,40 v-3.500 a1.300,1.300 0 0 1 2.600,0 v2" fill="none" stroke="#b0b0b0" stroke-width="1"/>
<path d="M756.500,40.300 C758.500,40.600 760.200,42.300 759.800,46 C758.800,44.600 758,44 756.800,43.600 z" fill="#a8a8a8"/>
<rect x="744.200" y="47.500" width="15.700" height="3.200" fill="#e3e3e3"/>
<path d="M766,42 h5 l-2.500,3 z" fill="#b8b8b8"/>
<!-- shape outline -->
<path d="M754,58.500 h-9.500 v10.200 h3.300" fill="none" stroke="#b0b0b0" stroke-width="1.200"/>
<path d="M757.600,58.600 l2,2 l-7.200,7 l-3.300,1.200 l1.200,-3.300 z" fill="#b8b8b8"/>
<path d="M749.100,68.800 l0.600,-1.700 l1.100,1.100 z" fill="#8a8a8a"/>
<path d="M766,65 h5 l-2.500,3 z" fill="#b8b8b8"/>
<!-- shape effects -->
<path d="M748.500,83.800 L756.500,84.600 C757.800,84.800 758.300,85.500 758,86.500 L755.800,93 C755.400,94 754.600,94.500 753.500,94.300 L746,93 C744.600,92.700 744,91.800 744.500,90.500 L746.500,85 C746.900,84 747.500,83.700 748.500,83.800 z" fill="#ababab"/>
<path d="M748.800,84.300 L756.300,85.100 C757.300,85.200 757.600,85.700 757.300,86.500 L755.600,90.600 C755.300,91.300 754.800,91.500 754,91.400 L746.300,90.300 C745.500,90.200 745.300,89.700 745.600,89 L747.300,85.100 C747.600,84.500 748,84.200 748.800,84.300 z" fill="#f2f2f2"/>
<path d="M764,88 h5 l-2.500,3 z" fill="#b8b8b8"/>
<!-- binoculars -->
<g fill="#666">
<path d="M798,41 h3 v13 h-6 v-5.500 l1.500,-1.500 v-2.500 l1.500,-1.500 z"/>
<path d="M807,41 h-3 v13 h6 v-5.500 l-1.500,-1.500 v-2.500 l-1.500,-1.500 z"/>
<rect x="800.500" y="45" width="4" height="3.500"/>
</g>
<g fill="#fff">
<rect x="796.100" y="49.300" width="1.100" height="3.700"/><rect x="807.800" y="49.300" width="1.100" height="3.700"/>
<rect x="799" y="42" width="1" height="1" opacity="0.800"/><rect x="805" y="42" width="1" height="1" opacity="0.800"/>
<rect x="798" y="44" width="1" height="1" opacity="0.800"/><rect x="806" y="44" width="1" height="1" opacity="0.800"/>
<rect x="802" y="47" width="1" height="1" opacity="0.800"/>
</g>
<path d="M802,88 h5 l-2.500,3 z" fill="#666"/>
<!-- collapse caret -->
<path d="M869.500,118 l4,-4.500 l4,4.500" fill="none" stroke="#666" stroke-width="2"/>
<!-- scrollbar arrows -->
<path d="M875.500,135.500 h7 l-3.500,-4 z" fill="#777"/>
<path d="M875.500,537 h7 l-3.500,4 z" fill="#777"/>
<path d="M875.500,555.500 h7 l-3.500,-4 z M875.500,560 h7 l-3.500,-4 z" fill="#777"/>
<path d="M875.500,569.500 h7 l-3.500,4 z M875.500,574 h7 l-3.500,4 z" fill="#777"/>
<!-- ===== status bar icons ===== -->
<g fill="none" stroke="#fff" stroke-width="1">
<!-- spell book -->
<path d="M160.500,611 l-2,-1.500 h-4 v10 h4.500 l2,2 l2,-2 h4.500 v-3.500 M160.500,611 v10 M160.500,611 l2,-1.500 h2.500"/>
<path d="M162.500,614 l2,2.500 l3.500,-5.500" stroke-width="1.200"/>
<!-- notes -->
<path d="M404,616.500 h11.500 M404,620.500 h6" stroke-width="1.500"/>
<!-- reading view -->
<path d="M618.600,610.300 l-1.500,-0.800 h-4.200 v10 h4.500 l1.200,2.300 l1.200,-2.300 h4.500 v-10 h-4.200 z M618.600,610.300 v10" stroke-width="1.200"/>
<path d="M614.500,611.500 h3 M614.500,613.500 h3 M614.500,615.500 h3 M614.500,617.500 h3 M619.800,611.500 h3 M619.800,613.500 h3 M619.800,615.500 h3 M619.800,617.500 h3" stroke-width="0.900"/>
<!-- slideshow -->
<path d="M650.200,610.700 h12.800" stroke-width="1.600"/>
<path d="M651.700,611 v5 a1.500,1.500 0 0 0 1.500,1.500 h7 a1.500,1.500 0 0 0 1.500,-1.500 v-5 M656.800,617.500 v3.500 M654,621.300 h5.600" stroke-width="1.200"/>
<path d="M654,613.500 h5.600" stroke-width="1"/>
<!-- zoom slider -->
<path d="M691,615.500 h100 M741.500,612 v7"/>
<!-- fit -->
<g transform="translate(0,0.8)">
<rect x="857.500" y="609.700" width="12" height="12"/>
<path d="M863.500,610.700 v3.500 M863.500,617.700 v3.500 M858.500,615.700 h3.500 M865.500,615.700 h3.500 M862,612.200 l1.500,1.500 l1.500,-1.500 M862,619.200 l1.500,-1.500 l1.500,1.500 M860,614.200 l1.500,1.500 l-1.500,1.500 M867,614.200 l-1.500,1.500 l1.500,1.500" stroke-width="0.800"/>
</g>
</g>
<g fill="#fff">
<path d="M407.200,613.800 h5.600 l-2.800,-3.300 z"/>
<!-- comment bubble -->
<path d="M466,610 h10 a1,1 0 0 1 1,1 v6.500 a1,1 0 0 1 -1,1 h-3 l-2.500,3 v-3 h-4.500 a1,1 0 0 1 -1,-1 v-6.500 a1,1 0 0 1 1,-1 z"/>
<!-- normal view -->
<rect x="536" y="609" width="3.700" height="13" fill="#fbeeea"/>
<rect x="540.100" y="609.500" width="9.400" height="6.500" fill="none" stroke="#fff" stroke-width="1"/>
<rect x="542.200" y="611.700" width="4.800" height="2.600" fill="#fbeeea"/>
<rect x="540.100" y="617.500" width="9.400" height="4" fill="none" stroke="#fff" stroke-width="1"/>
<rect x="539" y="609" width="1.500" height="13" fill="#fff"/>
<!-- grid -->
<g fill="#fbeae5">
<rect x="574.100" y="609" width="5.600" height="4.800"/><rect x="582.300" y="609" width="5.700" height="4.800"/>
<rect x="574.100" y="617" width="5.600" height="4.800"/><rect x="582.300" y="617" width="5.700" height="4.800"/>
</g>
<!-- minus / plus / thumb -->
<rect x="681" y="614.500" width="6" height="2"/>
<rect x="795" y="614.500" width="8" height="2"/><rect x="798" y="611.500" width="2" height="8"/>
<rect x="714.500" y="609" width="4" height="13"/>
</g>

</svg>

</body>
</html>
